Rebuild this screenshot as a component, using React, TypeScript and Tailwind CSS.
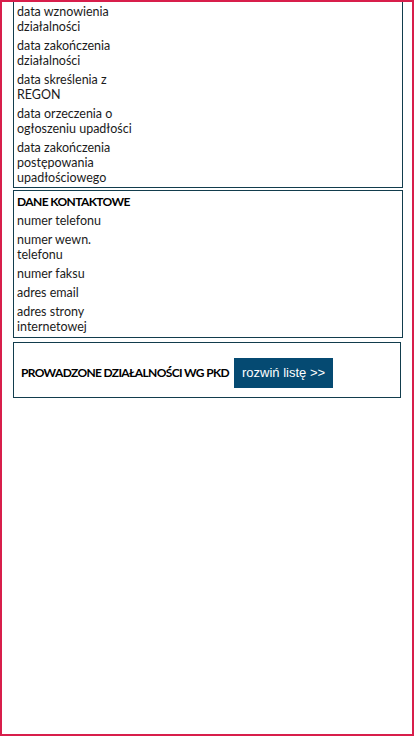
const font = { fontFamily: 'Lato, "Liberation Sans", sans-serif' };

function Item({ children }: { children: React.ReactNode }) {
  return <div className="w-[116px] text-[12.5px] leading-[15px] text-[#1b1b1b] py-[2px]">{children}</div>;
}

export default function App() {
  return (
    <div className="w-[414px] h-[736px] border-2 border-[#d81e4b] bg-white overflow-hidden" style={font}>
      <div className="pl-[11px] pr-[9px] flex flex-col">
        {/* Dates section (scrolled) */}
        <div className="border border-t-0 border-[#123d4d] px-[3px] flex flex-col">
          <Item>data wznowienia działalności</Item>
          <Item>data zakończenia działalności</Item>
          <Item>data skreślenia z REGON</Item>
          <Item>data orzeczenia o ogłoszeniu upadłości</Item>
          <Item>data zakończenia postępowania upadłościowego</Item>
        </div>

        {/* Contact */}
        <div className="mt-[2px] border border-[#123d4d] px-[3px] pt-[1px] pb-[1px] flex flex-col">
          <div className="text-[12px] leading-[15px] font-bold tracking-[-0.6px] text-black py-[2px]">DANE KONTAKTOWE</div>
          <Item>numer telefonu</Item>
          <Item>numer wewn. telefonu</Item>
          <Item>numer faksu</Item>
          <Item>adres email</Item>
          <Item>adres strony internetowej</Item>
        </div>

        {/* PKD */}
        <div className="mt-[4px] mr-[2px] h-[56px] border border-[#123d4d] pl-[7px] pt-[5px] flex items-center gap-[5px]">
          <span className="text-[12px] font-bold tracking-[-0.65px] text-black">PROWADZONE DZIAŁALNOŚCI WG PKD</span>
          <button
            className="h-[30px] px-[8px] bg-[#054a72] text-white text-[13px]"
            style={{ fontFamily: '"Liberation Sans", Arial, sans-serif' }}
          >
            rozwiń listę &gt;&gt;
          </button>
        </div>
      </div>
    </div>
  );
}
